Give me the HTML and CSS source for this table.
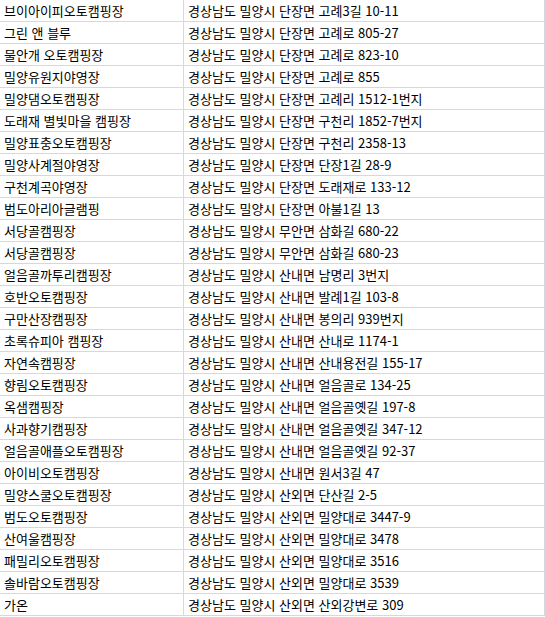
FILE: index.html
```html
<!DOCTYPE html>
<html lang="ko">
<head>
<meta charset="utf-8">
<link rel="stylesheet" href="styles.css">
</head>
<body>
<table class="list">
<tbody>
<tr><td class="name">브이아이피오토캠핑장</td><td class="addr">경상남도 밀양시 단장면 고례3길 10-11</td></tr>
<tr><td class="name">그린 앤 블루</td><td class="addr">경상남도 밀양시 단장면 고례로 805-27</td></tr>
<tr><td class="name">물안개 오토캠핑장</td><td class="addr">경상남도 밀양시 단장면 고례로 823-10</td></tr>
<tr><td class="name">밀양유원지야영장</td><td class="addr">경상남도 밀양시 단장면 고례로 855</td></tr>
<tr><td class="name">밀양댐오토캠핑장</td><td class="addr">경상남도 밀양시 단장면 고례리 1512-1번지</td></tr>
<tr><td class="name">도래재 별빛마을 캠핑장</td><td class="addr">경상남도 밀양시 단장면 구천리 1852-7번지</td></tr>
<tr><td class="name">밀양표충오토캠핑장</td><td class="addr">경상남도 밀양시 단장면 구천리 2358-13</td></tr>
<tr><td class="name">밀양사계절야영장</td><td class="addr">경상남도 밀양시 단장면 단장1길 28-9</td></tr>
<tr><td class="name">구천계곡야영장</td><td class="addr">경상남도 밀양시 단장면 도래재로 133-12</td></tr>
<tr><td class="name">범도아리아글램핑</td><td class="addr">경상남도 밀양시 단장면 아불1길 13</td></tr>
<tr><td class="name">서당골캠핑장</td><td class="addr">경상남도 밀양시 무안면 삼화길 680-22</td></tr>
<tr><td class="name">서당골캠핑장</td><td class="addr">경상남도 밀양시 무안면 삼화길 680-23</td></tr>
<tr><td class="name">얼음골까투리캠핑장</td><td class="addr">경상남도 밀양시 산내면 남명리 3번지</td></tr>
<tr><td class="name">호반오토캠핑장</td><td class="addr">경상남도 밀양시 산내면 발례1길 103-8</td></tr>
<tr><td class="name">구만산장캠핑장</td><td class="addr">경상남도 밀양시 산내면 봉의리 939번지</td></tr>
<tr><td class="name">초록슈피아 캠핑장</td><td class="addr">경상남도 밀양시 산내면 산내로 1174-1</td></tr>
<tr><td class="name">자연속캠핑장</td><td class="addr">경상남도 밀양시 산내면 산내용전길 155-17</td></tr>
<tr><td class="name">향림오토캠핑장</td><td class="addr">경상남도 밀양시 산내면 얼음골로 134-25</td></tr>
<tr><td class="name">옥샘캠핑장</td><td class="addr">경상남도 밀양시 산내면 얼음골옛길 197-8</td></tr>
<tr><td class="name">사과향기캠핑장</td><td class="addr">경상남도 밀양시 산내면 얼음골옛길 347-12</td></tr>
<tr><td class="name">얼음골애플오토캠핑장</td><td class="addr">경상남도 밀양시 산내면 얼음골옛길 92-37</td></tr>
<tr><td class="name">아이비오토캠핑장</td><td class="addr">경상남도 밀양시 산내면 원서3길 47</td></tr>
<tr><td class="name">밀양스쿨오토캠핑장</td><td class="addr">경상남도 밀양시 산외면 단산길 2-5</td></tr>
<tr><td class="name">범도오토캠핑장</td><td class="addr">경상남도 밀양시 산외면 밀양대로 3447-9</td></tr>
<tr><td class="name">산여울캠핑장</td><td class="addr">경상남도 밀양시 산외면 밀양대로 3478</td></tr>
<tr><td class="name">패밀리오토캠핑장</td><td class="addr">경상남도 밀양시 산외면 밀양대로 3516</td></tr>
<tr><td class="name">솔바람오토캠핑장</td><td class="addr">경상남도 밀양시 산외면 밀양대로 3539</td></tr>
<tr><td class="name">가온</td><td class="addr">경상남도 밀양시 산외면 산외강변로 309</td></tr>
</tbody>
</table>
</body>
</html>
```

FILE: styles.css
```css
html, body {
  margin: 0;
  padding: 0;
  background: #ffffff;
}
body {
  font-family: "Noto Sans CJK KR", "Noto Sans", sans-serif;
  font-size: 13px;
  color: #000000;
}
.list {
  border-collapse: collapse;
  width: 545px;
  margin-top: -1px;
  table-layout: fixed;
}
.list td {
  border: 1px solid #d4d8df;
  height: 21px;
  padding: 0 0 0 4px;
  line-height: 20px;
  white-space: nowrap;
  overflow: hidden;
  vertical-align: middle;
}
.list td.name {
  width: 179px;
  border-left: none;
}
```
